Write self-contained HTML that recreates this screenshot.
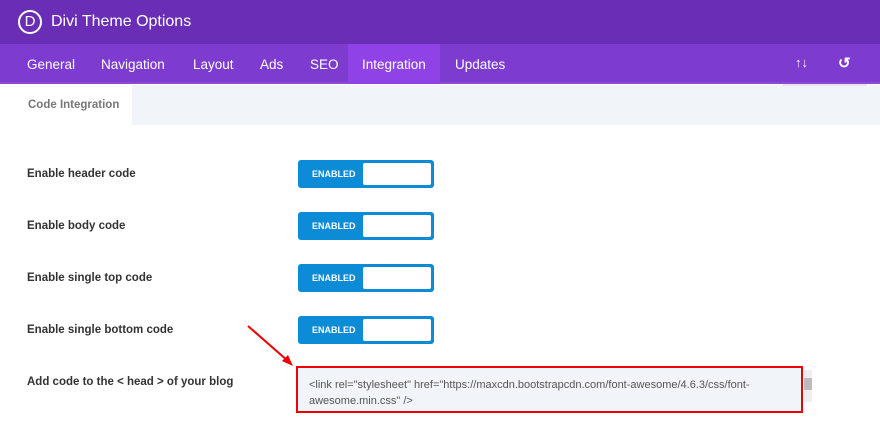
<!DOCTYPE html>
<html><head><style>
*{margin:0;padding:0;box-sizing:border-box}
body{width:880px;height:428px;background:#fff;font-family:"Liberation Sans",sans-serif;position:relative;overflow:hidden}
.top{position:absolute;left:0;top:0;width:880px;height:44px;background:#6a2db5}
.logo{position:absolute;left:18px;top:10px;width:24px;height:24px;border:2px solid #fff;border-radius:50%;color:#fff;font-size:15px;text-align:center;line-height:20px}
.title{position:absolute;left:51px;top:13px;color:#fff;font-size:16px}
.nav{position:absolute;left:0;top:44px;width:880px;height:40px;background:#7d3bcf;border-bottom:2px solid #8a4ad6}
.act{position:absolute;left:348px;top:44px;width:92px;height:40px;background:#8f43e6}
.sub{position:absolute;left:0;top:85px;width:880px;height:40px;background:#f1f4f8}
.subt{position:absolute;left:0;top:85px;width:132px;height:40px;background:#fff;color:#777;font-size:11.5px;font-weight:bold;padding:14px 0 0 28px}
.lbl{position:absolute;left:27px;font-size:11.5px;font-weight:bold;color:#333}
.tg{position:absolute;left:298px;width:136px;height:28px;background:#0c8bd6;border-radius:3px}
.tg b{position:absolute;left:14px;top:9px;color:#fff;font-size:9px}
.tg i{position:absolute;left:65px;top:3px;width:68px;height:22px;background:#fff;border-radius:2px}
.ta{position:absolute;left:296px;top:366px;width:507px;height:47px;border:2px solid #e00;background:#f1f4f8;font-size:11px;color:#555;padding:9px 0 0 11px;line-height:16px}
.n{position:absolute;top:13px;color:#fff;font-size:13.5px}
</style></head><body>
<div class="top"><div class="logo">D</div><div class="title">Divi Theme Options</div></div>
<div class="nav"></div><div class="act"></div>
<div style="position:absolute;left:0;top:44px;height:40px;width:880px">
<span class="n" style="left:27px">General</span>
<span class="n" style="left:101px">Navigation</span>
<span class="n" style="left:193px">Layout</span>
<span class="n" style="left:260px">Ads</span>
<span class="n" style="left:310px">SEO</span>
<span class="n" style="left:362px">Integration</span>
<span class="n" style="left:455px">Updates</span>
<span style="position:absolute;left:795px;top:11px;color:#fff;font-size:13px;font-weight:bold">↑↓</span>
<span style="position:absolute;left:838px;top:10px;color:#fff;font-size:15px;font-weight:bold">↺</span>
</div>
<div class="sub"></div>
<div style="position:absolute;left:783px;top:84px;width:84px;height:2px;background:#e9e4f5"></div>
<div class="subt">Code Integration</div>
<div class="lbl" style="top:168px">Enable header code</div>
<div class="lbl" style="top:220px">Enable body code</div>
<div class="lbl" style="top:272px">Enable single top code</div>
<div class="lbl" style="top:324px">Enable single bottom code</div>
<div class="lbl" style="top:376px">Add code to the &lt; head &gt; of your blog</div>
<div class="tg" style="top:160px"><b>ENABLED</b><i></i></div>
<div class="tg" style="top:212px"><b>ENABLED</b><i></i></div>
<div class="tg" style="top:264px"><b>ENABLED</b><i></i></div>
<div class="tg" style="top:316px"><b>ENABLED</b><i></i></div>
<div class="ta">&lt;link rel="stylesheet" href="https://maxcdn.bootstrapcdn.com/font-awesome/4.6.3/css/font-<br>awesome.min.css" /&gt;</div>
<div style="position:absolute;left:804px;top:370px;width:8px;height:32px;background:#eee"><div style="margin-top:8px;height:12px;background:#bbb"></div></div>
<svg style="position:absolute;left:0;top:0" width="880" height="428"><line x1="248" y1="326" x2="288" y2="361" stroke="#e00" stroke-width="2"/><polygon points="293,366 282,361 288,355" fill="#e00"/></svg>
</body></html>
